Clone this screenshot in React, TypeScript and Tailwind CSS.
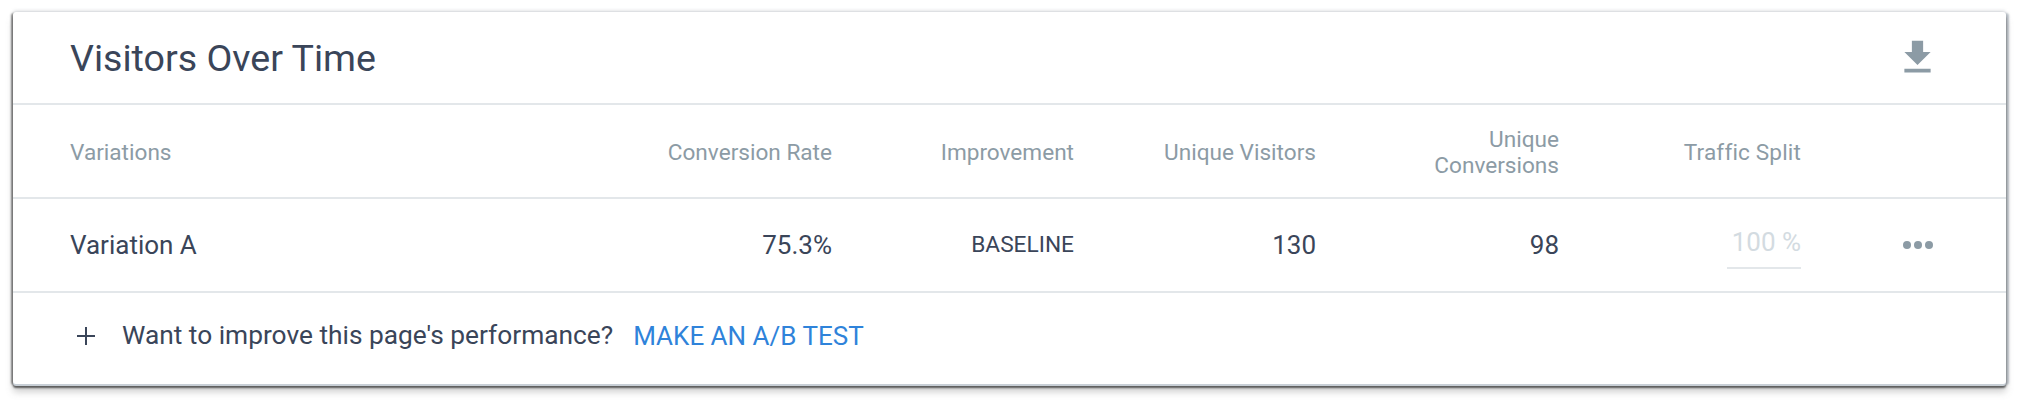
import React from 'react';

const columns = 'grid grid-cols-[1fr_242px_242px_242px_243px_242px_132px] items-center pl-[57px] pr-[73px]';

export default function App() {
  return (
    <div className="min-h-[406px] bg-white pt-3 pl-[13px] pr-[21px] font-['Roboto',sans-serif]">
      <div className="h-[372px] rounded-[3px] bg-white shadow-[0_2px_0_#c8cfd6,0_4px_2px_rgba(70,70,70,0.85),0_8px_7px_rgba(120,120,120,0.35),-2px_1px_2px_rgba(90,90,90,0.7),3px_1px_2px_rgba(150,160,170,0.65),0_-2px_3px_rgba(190,195,200,0.4)]">
        <div className="flex h-[93px] items-center justify-between border-b-2 border-[#e3e7ea] pl-[57px] pr-[66px]">
          <h1 className="pt-[2px] text-[37.6px] font-normal text-[#3a4559]">Visitors Over Time</h1>
          <svg viewBox="0 0 24 24" className="h-[45px] w-[45px] fill-[#8c9ba5]">
            <path d="M19 9h-4V3H9v6H5l7 7 7-7zM5 18v2h14v-2H5z" />
          </svg>
        </div>

        <div className={`${columns} h-[94px] border-b-2 border-[#e3e7ea] pt-[3px] text-[22.6px] leading-[26px] text-[#8c9ba5]`}>
          <div>Variations</div>
          <div className="text-right">Conversion Rate</div>
          <div className="text-right">Improvement</div>
          <div className="text-right">Unique Visitors</div>
          <div className="text-right">
            Unique
            <br />
            Conversions
          </div>
          <div className="text-right tracking-[0.15px]">Traffic Split</div>
          <div />
        </div>

        <div className={`${columns} h-[94px] border-b-2 border-[#e3e7ea] text-[26px] text-[#3a4559]`}>
          <div>Variation A</div>
          <div className="text-right">75.3%</div>
          <div className="text-right text-[22.7px]">BASELINE</div>
          <div className="text-right">130</div>
          <div className="text-right">98</div>
          <div className="flex justify-end">
            <div className="mt-[1px] w-[74px] border-b-2 border-[#e3e7ea] pb-[5px] text-right text-[#d3dbe1]">100 %</div>
          </div>
          <div className="flex justify-end gap-[3px]">
            <span className="h-2 w-2 rounded-full bg-[#8c9ba5]" />
            <span className="h-2 w-2 rounded-full bg-[#8c9ba5]" />
            <span className="h-2 w-2 rounded-full bg-[#8c9ba5]" />
          </div>
        </div>

        <div className="flex h-[91px] items-center pb-[5px] pl-[63px] text-[26.3px] text-[#3a4559]">
          <svg viewBox="0 0 20 20" className="mr-[26px] h-5 w-5 stroke-[#3a4559] stroke-2">
            <path d="M10 1v18M1 10h18" />
          </svg>
          <span>Want to improve this page's performance?</span>
          <a className="ml-[20px] text-[26px] text-[#2f83da]">MAKE AN A/B TEST</a>
        </div>
      </div>
    </div>
  );
}
